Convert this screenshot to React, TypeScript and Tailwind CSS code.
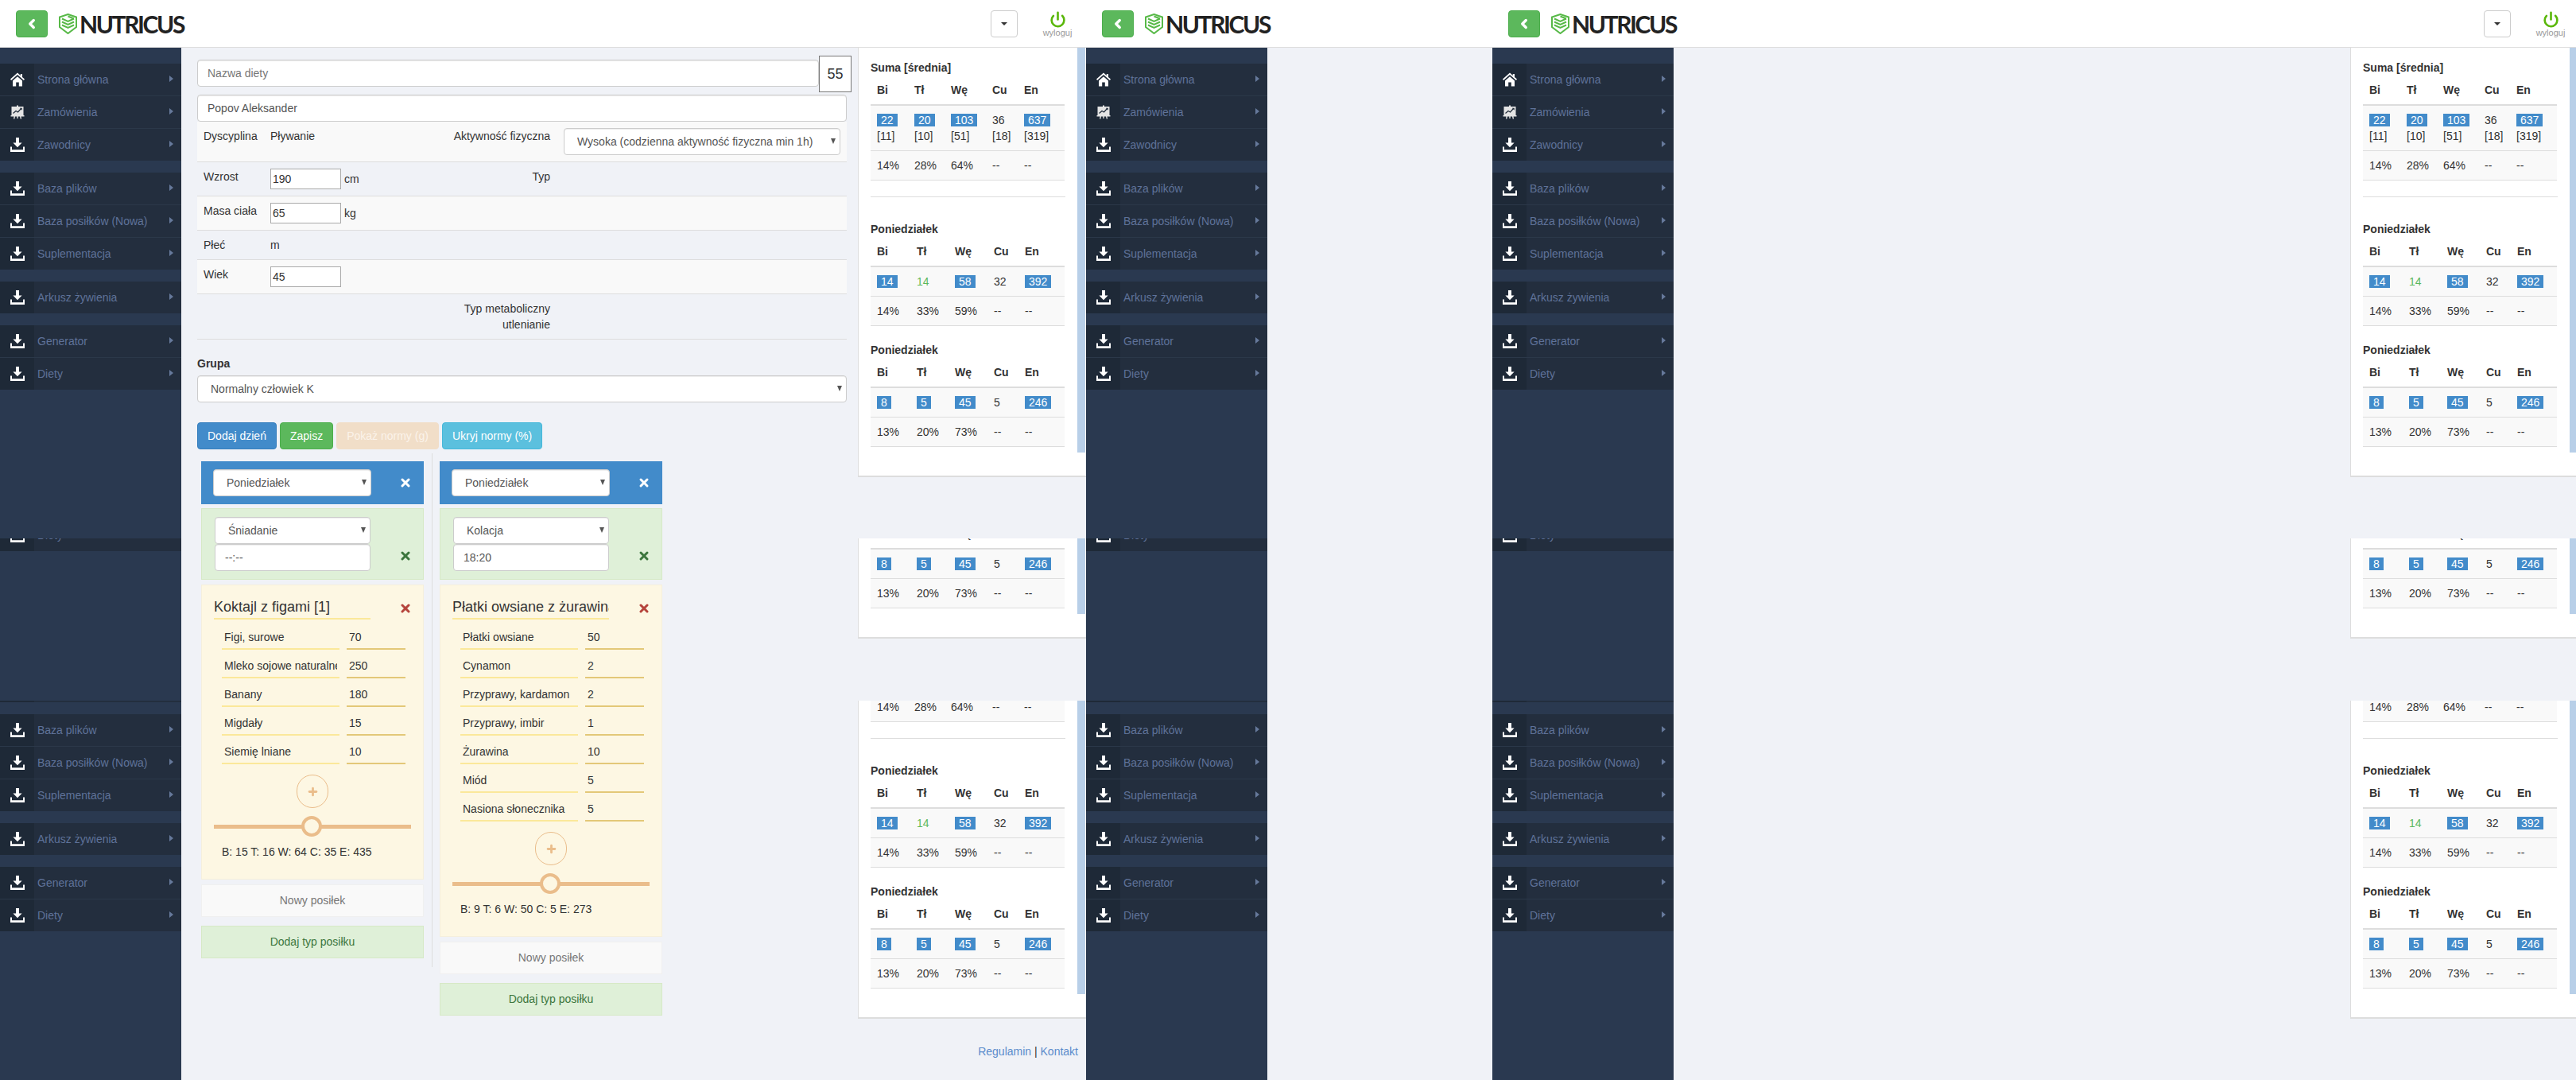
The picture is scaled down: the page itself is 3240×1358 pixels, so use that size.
import React from 'react'
import { ChevronLeft, Plus, Power, X } from 'lucide-react'

const menuGroups = [
  [
    { label: 'Strona główna', icon: 'home' },
    { label: 'Zamówienia', icon: 'chart' },
    { label: 'Zawodnicy', icon: 'download' },
  ],
  [
    { label: 'Baza plików', icon: 'download' },
    { label: 'Baza posiłków (Nowa)', icon: 'download' },
    { label: 'Suplementacja', icon: 'download' },
  ],
  [{ label: 'Arkusz żywienia', icon: 'download' }],
  [
    { label: 'Generator', icon: 'download' },
    { label: 'Diety', icon: 'download' },
  ],
]

// the fixed layers repeat in three bands down the page
const slices = [
  { outer: 'h-[617px]', inner: 'mt-0' },
  { outer: 'h-[204px]', inner: '-mt-[414px]' },
  { outer: 'h-[477px]', inner: '-mt-[140px]' },
]

const inputClass =
  'h-[34px] bg-white border border-[#ccc] rounded-[4px] px-3 text-[14px] text-[#555] shadow-[inset_0_1px_1px_rgba(0,0,0,0.075)] outline-none'

function MenuIcon({ name }: { name: string }) {
  if (name === 'home') {
    return (
      <svg width="18" height="18" viewBox="0 0 18 18" fill="#fff">
        <path d="M9 .5 0 8.6l1.1 1.3L9 3l7.9 6.9L18 8.6l-3-2.7V2h-2.2v2z" />
        <path d="M3 10.6 9 5.3l6 5.3V17.500h-4.200v-5H7.200v5H3z" />
      </svg>
    )
  }
  if (name === 'chart') {
    return (
      <svg width="18" height="18" viewBox="0 0 18 18">
        <path fill="#e4e4e4" d="M8 .5h2v1.500H8zM1.500 2h15v11h-15zM.5 13h17v1.500H.5zM4.500 14.500H6L5.400 17.500H4zM12 14.500h1.500l.6 3h-1.400zM8.300 14.500h1.400v2.500H8.300z" />
        <path fill="none" stroke="#1e2a38" strokeWidth="1.200" d="M3.500 10.500 7 7.500l2.500 1.500 4-4.500" />
        <path fill="#1e2a38" d="M11.800 3.800h2.900v2.900z" />
      </svg>
    )
  }
  return (
    <svg width="18" height="18" viewBox="0 0 18 18" fill="#fff">
      <path d="M7 0h4v6.500h3.600L9 12.200 3.400 6.500H7z" />
      <path d="M0 11.500h2V15.200h14V11.500h2V18H0z" />
    </svg>
  )
}

function Logo() {
  return (
    <div className="flex items-center ml-[14px]">
      <svg width="23" height="26" viewBox="0 0 23 26" fill="none">
        <path d="M11.500 1 22 4.500V17l-10.500 8L1 17V4.500z" stroke="#57b947" strokeWidth="2" fill="#fff" />
        <path d="M4 6.500 11.500 10 19 6.500M4 10.500l7.500 3.500 7.500-3.500M4 14.500 11.500 18l7.500-3.500M11.500 3.500 19 6.500" stroke="#57b947" strokeWidth="2" />
      </svg>
      <span className="ml-[3px] font-['Lato',sans-serif] font-bold text-[30px] leading-none tracking-[-2.4px] text-[#222]">
        NUTRICUS
      </span>
    </div>
  )
}

function BackButton() {
  return (
    <button className="w-10 h-[34px] bg-[#5cb85c] border border-[#4cae4c] rounded-[4px] flex items-center justify-center">
      <ChevronLeft size={18} strokeWidth={4.500} color="#fff" />
    </button>
  )
}

function UserTools({ className }: { className: string }) {
  return (
    <div className={`ml-auto flex items-center ${className}`}>
      <button className="w-[34px] h-[34px] bg-white border border-[#ccc] rounded-[4px] flex items-center justify-center">
        <span className="border-x-4 border-x-transparent border-t-4 border-t-[#333]" />
      </button>
      <div className="ml-[34px] w-[32px] flex flex-col items-center mt-[3px]">
        <Power size={21} strokeWidth={3} color="#5ab70a" />
        <span className="text-[11px] leading-[13px] text-[#999]">wyloguj</span>
      </div>
    </div>
  )
}

function Header() {
  return (
    <header className="flex h-[60px] bg-white border-b border-[#ddd]">
      <div className="w-[1366px] flex items-center pl-5">
        <BackButton />
        <Logo />
        <UserTools className="pr-5" />
      </div>
      <div className="w-[511px] flex items-center pl-5">
        <BackButton />
        <Logo />
      </div>
      <div className="w-[1363px] flex items-center pl-5">
        <BackButton />
        <Logo />
        <UserTools className="pr-4" />
      </div>
    </header>
  )
}

function SidebarContent() {
  return (
    <div className="h-[620px] bg-[#2a3950] pt-5 flex flex-col gap-[15px]">
      {menuGroups.map((group, i) => (
        <div key={i}>
          {group.map((item, j) => (
            <div
              key={item.label}
              className={`flex items-stretch bg-[#232e3e] ${j < group.length - 1 ? 'h-[41px] border-b border-[#2b3849]' : 'h-10'}`}
            >
              <div className="w-[43px] bg-[#1e2937] flex items-center justify-center">
                <MenuIcon name={item.icon} />
              </div>
              <span className="ml-1 self-center text-[14px] text-[#5f7299]">{item.label}</span>
              <span className="ml-auto mr-[10px] mt-[15px] self-start border-y-4 border-y-transparent border-l-[5px] border-l-[#66799b]" />
            </div>
          ))}
        </div>
      ))}
    </div>
  )
}

function Sidebar() {
  return (
    <aside className="w-[228px] shrink-0">
      {slices.map((s, i) => (
        <div key={i} className={`overflow-hidden ${s.outer}`}>
          <div className={s.inner}>
            <SidebarContent />
          </div>
        </div>
      ))}
    </aside>
  )
}

type Cell = { v: string; hl?: boolean; green?: boolean; sub?: string }

function Summary({ title, cols, values, percents }: { title: string; cols: string[]; values: Cell[]; percents: string[] }) {
  const head = ['Bi', 'Tł', 'Wę', 'Cu', 'En']
  return (
    <div>
      <h4 className="font-bold text-[14px] leading-5 text-[#333]">{title}</h4>
      <table className="table-fixed w-[244px] text-[14px] leading-5 text-[#333] mb-5">
        <colgroup>
          {cols.map((c, i) => (
            <col key={i} className={c} />
          ))}
        </colgroup>
        <thead>
          <tr className="border-b-2 border-[#ddd]">
            {head.map((h) => (
              <th key={h} className="p-2 text-left font-bold">{h}</th>
            ))}
          </tr>
        </thead>
        <tbody>
          <tr className="bg-[#f9f9f9] border-b border-[#ddd]">
            {values.map((c, i) => (
              <td key={i} className={`p-2 whitespace-nowrap ${c.green ? 'text-[#5cb85c]' : ''}`}>
                {c.hl ? <span className="bg-[#428bca] text-white px-[5px]">{c.v}</span> : c.v}
                {c.sub && <div>{c.sub}</div>}
              </td>
            ))}
          </tr>
          <tr className="bg-[#f9f9f9] border-b border-[#ddd]">
            {percents.map((p, i) => (
              <td key={i} className="p-2 whitespace-nowrap">{p}</td>
            ))}
          </tr>
        </tbody>
      </table>
    </div>
  )
}

function SummaryCard() {
  const firstCols = ['w-[47px]', 'w-[46px]', 'w-[52px]', 'w-[40px]', 'w-[59px]']
  const dayCols = ['w-[50px]', 'w-[48px]', 'w-[49px]', 'w-[39px]', 'w-[58px]']
  return (
    <div className="h-[620px] bg-[#f0f2f7]">
      <div className="flex w-[287px] h-[540px] bg-white border-l border-b-2 border-[#ddd]">
        <div className="w-[275px] pl-[15px] pt-[15px] shrink-0">
          <Summary
            title="Suma [średnia]"
            cols={firstCols}
            values={[
              { v: '22', hl: true, sub: '[11]' },
              { v: '20', hl: true, sub: '[10]' },
              { v: '103', hl: true, sub: '[51]' },
              { v: '36', sub: '[18]' },
              { v: '637', hl: true, sub: '[319]' },
            ]}
            percents={['14%', '28%', '64%', '--', '--']}
          />
          <hr className="w-[245px] border-[#ddd] mb-[30px]" />
          <Summary
            title="Poniedziałek"
            cols={dayCols}
            values={[
              { v: '14', hl: true },
              { v: '14', green: true },
              { v: '58', hl: true },
              { v: '32' },
              { v: '392', hl: true },
            ]}
            percents={['14%', '33%', '59%', '--', '--']}
          />
          <Summary
            title="Poniedziałek"
            cols={dayCols}
            values={[
              { v: '8', hl: true },
              { v: '5', hl: true },
              { v: '45', hl: true },
              { v: '5' },
              { v: '246', hl: true },
            ]}
            percents={['13%', '20%', '73%', '--', '--']}
          />
        </div>
        <div className="w-[10px] h-[509px] bg-[#b8cfe8]" />
      </div>
    </div>
  )
}

function RightColumn({ width, footer }: { width: string; footer?: boolean }) {
  return (
    <div className={`relative shrink-0 ${width}`}>
      {slices.map((s, i) => (
        <div key={i} className={`overflow-hidden ${s.outer}`}>
          <div className={s.inner}>
            <SummaryCard />
          </div>
        </div>
      ))}
      {footer && (
        <div className="absolute bottom-[26px] right-[10px] text-[14px] leading-5 text-[#333]">
          <a className="text-[#5b8ccc]">Regulamin</a> | <a className="text-[#5b8ccc]">Kontakt</a>
        </div>
      )}
    </div>
  )
}

// native look of the old chrome select: flat box with a small solid caret
function SelectBox({ value, className }: { value: string; className: string }) {
  return (
    <div className={`relative ${className}`}>
      <select className={`${inputClass} w-full block appearance-none pl-4`} defaultValue={value}>
        <option value={value}>{value}</option>
      </select>
      <span className="absolute right-[6px] top-[13px] border-x-[3px] border-x-transparent border-t-[7px] border-t-[#555]" />
    </div>
  )
}

function InfoRow({ label, value, rightLabel, striped, select }: { label?: string; value?: React.ReactNode; rightLabel?: React.ReactNode; striped?: boolean; select?: boolean }) {
  return (
    <div className={`flex border-b border-[#ddd] text-[14px] leading-5 text-[#333] ${striped ? 'bg-[#f9f9f9]' : ''}`}>
      <div className="w-[84px] p-2">{label}</div>
      <div className="w-[368px] flex">
        <div className="w-[170px] p-2 flex items-start">{value}</div>
        <div className="flex-1 p-2 text-right">{rightLabel}</div>
      </div>
      {select && (
        <div className="pl-[9px] py-2">
          <SelectBox value="Wysoka (codzienna aktywność fizyczna min 1h)" className="w-[348px]" />
        </div>
      )}
    </div>
  )
}

function SmallInput({ value, unit }: { value: string; unit?: string }) {
  return (
    <>
      <input readOnly value={value} className="w-[89px] h-[26px] shrink-0 bg-white border border-[#aaa] px-[2px] text-[14px] text-[#333] outline-none" />
      {unit && <span className="ml-1 mt-[3px] text-[#333]">{unit}</span>}
    </>
  )
}

type Day = {
  meal: string
  time: string
  title: string
  items: [string, string][]
  stats: string
}

const days: Day[] = [
  {
    meal: 'Śniadanie',
    time: '--:--',
    title: 'Koktajl z figami [1]',
    items: [
      ['Figi, surowe', '70'],
      ['Mleko sojowe naturalne', '250'],
      ['Banany', '180'],
      ['Migdały', '15'],
      ['Siemię lniane', '10'],
    ],
    stats: 'B: 15 T: 16 W: 64 C: 35 E: 435',
  },
  {
    meal: 'Kolacja',
    time: '18:20',
    title: 'Płatki owsiane z żurawiną',
    items: [
      ['Płatki owsiane', '50'],
      ['Cynamon', '2'],
      ['Przyprawy, kardamon', '2'],
      ['Przyprawy, imbir', '1'],
      ['Żurawina', '10'],
      ['Miód', '5'],
      ['Nasiona słonecznika', '5'],
    ],
    stats: 'B: 9 T: 6 W: 50 C: 5 E: 273',
  },
]

function DayColumn({ day }: { day: Day }) {
  return (
    <div className="w-[280px]">
      <div className="h-[54px] bg-[#428bca] flex items-center pl-[15px] pr-[15px]">
        <SelectBox value="Poniedziałek" className="w-[199px]" />
        <X className="ml-auto" size={16} strokeWidth={4.500} color="#fff" />
      </div>

      <div className="mt-[5px] h-[90px] bg-[#dff0d8] border border-[#d6e9c6] pl-[16px] pr-[14px] pt-[10px] flex">
        <div className="w-[196px] flex flex-col">
          <SelectBox value={day.meal} className="w-full" />
          <input readOnly value={day.time} className={`${inputClass} w-full`} />
        </div>
        <X className="ml-auto mt-[41px]" size={16} strokeWidth={4.500} color="#3c763d" />
      </div>

      <div className="mt-[6px] bg-[#fdf7e3] border border-[#f5efdc] pb-[24px]">
        <div className="flex pl-[15px] pr-[14px] pt-[14px] items-center">
          <input
            readOnly
            value={day.title}
            className="w-[197px] h-[29px] bg-transparent border-b-2 border-[#fbe89a] text-[18px] text-[#333] outline-none"
          />
          <X className="ml-auto" size={16} strokeWidth={4.500} color="#b5443c" />
        </div>
        <div className="pt-[8px] flex flex-col gap-[6px]">
          {day.items.map(([name, amount]) => (
            <div key={name} className="flex pl-[25px] h-[30px]">
              <input
                readOnly
                value={name}
                className="w-[148px] bg-transparent border-b-2 border-[#fbe89a] px-[3px] text-[14px] text-[#333] outline-none"
              />
              <input
                readOnly
                value={amount}
                className="ml-[9px] w-[74px] bg-transparent border-b-2 border-[#e3c878] px-[3px] text-[14px] text-[#333] outline-none"
              />
            </div>
          ))}
        </div>
        <div className="mt-[13px] mx-auto w-[40px] h-[42px] rounded-full border border-[#eabd8b] flex items-center justify-center">
          <Plus size={15} strokeWidth={4.500} color="#eabd8b" />
        </div>
        <div className="relative mt-[10px] ml-[15px] w-[248px] h-[26px] flex items-center">
          <div className="w-full h-[5px] bg-[#eabd8b]" />
          <div className="absolute left-[110px] top-0 w-[26px] h-[26px] rounded-full border-4 border-[#eabd8b] bg-[#fdf7e3]" />
        </div>
        <div className="mt-[9px] pl-[25px] text-[14px] leading-5 text-[#333]">{day.stats}</div>
      </div>

      <div className="mt-[6px] h-[41px] bg-[#f9f9f9] border border-[#f0f0f0] flex items-center justify-center text-[14px] text-[#777]">
        Nowy posiłek
      </div>
      <div className="mt-[11px] h-[41px] bg-[#dff0d8] border border-[#d6e9c6] flex items-center justify-center text-[14px] text-[#3c763d]">
        Dodaj typ posiłku
      </div>
    </div>
  )
}

function Main() {
  return (
    <main className="w-[851px] shrink-0 h-[1298px] overflow-hidden pl-5 pt-[10px]">
      <div className="flex items-start">
        <input readOnly placeholder="Nazwa diety" className={`${inputClass} w-[782px] mt-[5px] placeholder:text-[#777]`} />
        <div className="w-[41px] h-[46px] bg-white border border-[#777] flex items-center justify-center text-[18px] text-[#333]">
          55
        </div>
      </div>
      <input readOnly value="Popov Aleksander" className={`${inputClass} w-[817px] mt-[3px] block`} />

      <div className="w-[817px]">
        <InfoRow striped label="Dyscyplina" value="Pływanie" rightLabel="Aktywność fizyczna" select />
        <InfoRow label="Wzrost" value={<SmallInput value="190" unit="cm" />} rightLabel="Typ" />
        <InfoRow striped label="Masa ciała" value={<SmallInput value="65" unit="kg" />} />
        <InfoRow label="Płeć" value="m" />
        <InfoRow striped label="Wiek" value={<SmallInput value="45" />} />
        <InfoRow
          rightLabel={
            <>
              Typ metaboliczny
              <br />
              utlenianie
            </>
          }
        />
      </div>

      <label className="block mt-5 mb-[5px] text-[14px] leading-5 font-bold text-[#333]">Grupa</label>
      <SelectBox value="Normalny człowiek K" className="w-[817px]" />

      <div className="mt-[25px] flex gap-1 text-[14px] text-white">
        <button className="h-[34px] px-3 rounded-[4px] bg-[#428bca] border border-[#357ebd]">Dodaj dzień</button>
        <button className="h-[34px] px-3 rounded-[4px] bg-[#5cb85c] border border-[#4cae4c]">Zapisz</button>
        <button className="h-[34px] px-3 rounded-[4px] bg-[#f1dec8] border border-[#f1dec8] text-[#fbf3ea]">Pokaż normy (g)</button>
        <button className="h-[34px] px-3 rounded-[4px] bg-[#5bc0de] border border-[#46b8da]">Ukryj normy (%)</button>
      </div>

      <div className="mt-[5px] flex items-start">
        <div className="w-[296px] pl-[5px] pt-[10px] pb-[11px] border-r border-[#ddd]">
          <DayColumn day={days[0]} />
        </div>
        <div className="ml-[9px] pt-[10px]">
          <DayColumn day={days[1]} />
        </div>
      </div>
    </main>
  )
}

export default function App() {
  return (
    <div className="w-[3240px] h-[1358px] overflow-hidden bg-[#f0f2f7] font-['Liberation_Sans',Arial,sans-serif]">
      <Header />
      <div className="flex">
        <Sidebar />
        <Main />
        <RightColumn width="w-[287px]" footer />
        <Sidebar />
        <div className="w-[283px] shrink-0" />
        <Sidebar />
        <div className="w-[851px] shrink-0" />
        <RightColumn width="w-[284px] overflow-hidden" />
      </div>
    </div>
  )
}
